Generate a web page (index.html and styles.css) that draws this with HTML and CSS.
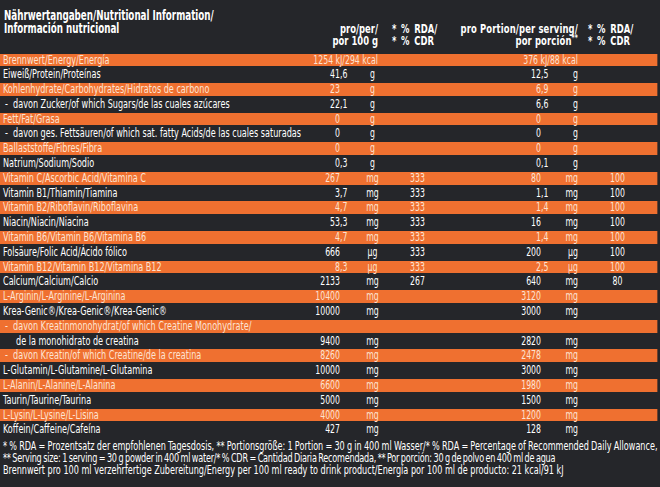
FILE: index.html
```html
<!DOCTYPE html>
<html lang="de">
<head>
<meta charset="utf-8">
<title>Nährwertangaben</title>
<link rel="stylesheet" href="styles.css">
</head>
<body>
<div class="frame">
<div class="page">
  <div class="head">
    <div class="title">Nährwertangaben/Nutritional Information/<br>Información nutricional</div>
    <div class="h h-v1">pro/per/<br>por 100 g</div>
    <div class="h h-r1">* % RDA/<br>* % CDR</div>
    <div class="h h-v2">pro Portion/per serving/<br>por porción<sup>**</sup></div>
    <div class="h h-r2">* % RDA/<br>* % CDR</div>
  </div>
  <div class="rows">
    <div class="row o"><span class="l">Brennwert/Energy/Energía</span><span class="e1">1254 kJ/294 kcal</span><span class="r1"></span><span class="e2">376 kJ/88 kcal</span><span class="r2"></span></div>
    <div class="row"><span class="l">Eiweiß/Protein/Proteínas</span><span class="v1"><i>41</i>,6</span><span class="u1">g</span><span class="r1"></span><span class="v2"><i>12</i>,5</span><span class="u2">g</span><span class="r2"></span></div>
    <div class="row o"><span class="l">Kohlenhydrate/Carbohydrates/Hidratos de carbono</span><span class="v1"><i>23</i></span><span class="u1">g</span><span class="r1"></span><span class="v2"><i>6</i>,9</span><span class="u2">g</span><span class="r2"></span></div>
    <div class="row"><span class="l sub">-&nbsp; davon Zucker/of which Sugars/de las cuales azúcares</span><span class="v1"><i>22</i>,1</span><span class="u1">g</span><span class="r1"></span><span class="v2"><i>6</i>,6</span><span class="u2">g</span><span class="r2"></span></div>
    <div class="row o"><span class="l">Fett/Fat/Grasa</span><span class="v1"><i>0</i></span><span class="u1">g</span><span class="r1"></span><span class="v2"><i>0</i></span><span class="u2">g</span><span class="r2"></span></div>
    <div class="row"><span class="l sub">-&nbsp; davon ges. Fettsäuren/of which sat. fatty Acids/de las cuales saturadas</span><span class="v1"><i>0</i></span><span class="u1">g</span><span class="r1"></span><span class="v2"><i>0</i></span><span class="u2">g</span><span class="r2"></span></div>
    <div class="row o"><span class="l">Ballaststoffe/Fibres/Fibra</span><span class="v1"><i>0</i></span><span class="u1">g</span><span class="r1"></span><span class="v2"><i>0</i></span><span class="u2">g</span><span class="r2"></span></div>
    <div class="row"><span class="l">Natrium/Sodium/Sodio</span><span class="v1"><i>0</i>,3</span><span class="u1">g</span><span class="r1"></span><span class="v2"><i>0</i>,1</span><span class="u2">g</span><span class="r2"></span></div>
    <div class="row o"><span class="l">Vitamin C/Ascorbic Acid/Vitamina C</span><span class="v1"><i>267</i></span><span class="u1">mg</span><span class="r1">333</span><span class="v2"><i>80</i></span><span class="u2">mg</span><span class="r2">100</span></div>
    <div class="row"><span class="l">Vitamin B1/Thiamin/Tiamina</span><span class="v1"><i>3</i>,7</span><span class="u1">mg</span><span class="r1">333</span><span class="v2"><i>1</i>,1</span><span class="u2">mg</span><span class="r2">100</span></div>
    <div class="row o"><span class="l">Vitamin B2/Riboflavin/Riboflavina</span><span class="v1"><i>4</i>,7</span><span class="u1">mg</span><span class="r1">333</span><span class="v2"><i>1</i>,4</span><span class="u2">mg</span><span class="r2">100</span></div>
    <div class="row"><span class="l">Niacin/Niacin/Niacina</span><span class="v1"><i>53</i>,3</span><span class="u1">mg</span><span class="r1">333</span><span class="v2"><i>16</i></span><span class="u2">mg</span><span class="r2">100</span></div>
    <div class="row o"><span class="l">Vitamin B6/Vitamin B6/Vitamina B6</span><span class="v1"><i>4</i>,7</span><span class="u1">mg</span><span class="r1">333</span><span class="v2"><i>1</i>,4</span><span class="u2">mg</span><span class="r2">100</span></div>
    <div class="row"><span class="l">Folsäure/Folic Acid/Ácido fólico</span><span class="v1"><i>666</i></span><span class="u1">µg</span><span class="r1">333</span><span class="v2"><i>200</i></span><span class="u2">µg</span><span class="r2">100</span></div>
    <div class="row o"><span class="l">Vitamin B12/Vitamin B12/Vitamina B12</span><span class="v1"><i>8</i>,3</span><span class="u1">µg</span><span class="r1">333</span><span class="v2"><i>2</i>,5</span><span class="u2">µg</span><span class="r2">100</span></div>
    <div class="row"><span class="l">Calcium/Calcium/Calcio</span><span class="v1"><i>2133</i></span><span class="u1">mg</span><span class="r1">267</span><span class="v2"><i>640</i></span><span class="u2">mg</span><span class="r2">80</span></div>
    <div class="row o"><span class="l">L-Arginin/L-Arginine/L-Arginina</span><span class="v1"><i>10400</i></span><span class="u1">mg</span><span class="r1"></span><span class="v2"><i>3120</i></span><span class="u2">mg</span><span class="r2"></span></div>
    <div class="row"><span class="l">Krea-Genic®/Krea-Genic®/Krea-Genic®</span><span class="v1"><i>10000</i></span><span class="u1">mg</span><span class="r1"></span><span class="v2"><i>3000</i></span><span class="u2">mg</span><span class="r2"></span></div>
    <div class="row o"><span class="l sub">-&nbsp; davon Kreatinmonohydrat/of which Creatine Monohydrate/</span></div>
    <div class="row"><span class="l ind">de la monohidrato de creatina</span><span class="v1"><i>9400</i></span><span class="u1">mg</span><span class="r1"></span><span class="v2"><i>2820</i></span><span class="u2">mg</span><span class="r2"></span></div>
    <div class="row o"><span class="l sub">-&nbsp; davon Kreatin/of which Creatine/de la creatina</span><span class="v1"><i>8260</i></span><span class="u1">mg</span><span class="r1"></span><span class="v2"><i>2478</i></span><span class="u2">mg</span><span class="r2"></span></div>
    <div class="row"><span class="l">L-Glutamin/L-Glutamine/L-Glutamina</span><span class="v1"><i>10000</i></span><span class="u1">mg</span><span class="r1"></span><span class="v2"><i>3000</i></span><span class="u2">mg</span><span class="r2"></span></div>
    <div class="row o"><span class="l">L-Alanin/L-Alanine/L-Alanina</span><span class="v1"><i>6600</i></span><span class="u1">mg</span><span class="r1"></span><span class="v2"><i>1980</i></span><span class="u2">mg</span><span class="r2"></span></div>
    <div class="row"><span class="l">Taurin/Taurine/Taurina</span><span class="v1"><i>5000</i></span><span class="u1">mg</span><span class="r1"></span><span class="v2"><i>1500</i></span><span class="u2">mg</span><span class="r2"></span></div>
    <div class="row o"><span class="l">L-Lysin/L-Lysine/L-Lisina</span><span class="v1"><i>4000</i></span><span class="u1">mg</span><span class="r1"></span><span class="v2"><i>1200</i></span><span class="u2">mg</span><span class="r2"></span></div>
    <div class="row"><span class="l">Koffein/Caffeine/Cafeína</span><span class="v1"><i>427</i></span><span class="u1">mg</span><span class="r1"></span><span class="v2"><i>128</i></span><span class="u2">mg</span><span class="r2"></span></div>
  </div>
  <div class="foot">
    <p class="f1">* % RDA = Prozentsatz der empfohlenen Tagesdosis, ** Portionsgröße: 1 Portion = 30 g in 400 ml Wasser/* % RDA = Percentage of Recommended Daily Allowance,</p>
    <p class="f2">** Serving size: 1 serving = 30 g powder in 400 ml water/* % CDR = Cantidad Diaria Recomendada, ** Por porción: 30 g de polvo en 400 ml de agua</p>
    <p class="f3">Brennwert pro 100 ml verzehrfertige Zubereitung/Energy per 100 ml ready to drink product/Energía por 100 ml de producto: 21 kcal/91 kJ</p>
  </div>
</div>
</div>
</body>
</html>
```

FILE: styles.css
```css
:root {
  /* horizontal squeeze that emulates the condensed typeface of the label */
  --s: 0.72;
  --cols: calc(300px / var(--s)) calc(55px / var(--s)) calc(35px / var(--s)) calc(52px / var(--s)) calc(118px / var(--s)) calc(18px / var(--s)) calc(79px / var(--s));
}
html, body {
  margin: 0;
  padding: 0;
}
body {
  background: #25262a;
  color: #ffffff;
  font-family: "DejaVu Sans Condensed", "DejaVu Sans", sans-serif;
  font-stretch: condensed;
  width: 660px;
  height: 487px;
  overflow: hidden;
}
.frame {
  width: 660px;
  height: 487px;
  overflow: hidden;
}
.page {
  width: calc(657px / var(--s));
  transform: scaleX(var(--s));
  transform-origin: 0 0;
}
.head {
  display: grid;
  grid-template-columns: var(--cols);
  height: 52.5px;
  font-weight: bold;
}
.title {
  grid-column: 1 / 2;
  padding: 9px 0 0 calc(4px / var(--s));
  font-size: 13.5px;
  line-height: 13px;
  white-space: nowrap;
}
.h {
  padding-top: 22.5px;
  font-size: 13px;
  line-height: 12.5px;
  white-space: nowrap;
}
.h sup {
  font-size: 9px;
  line-height: 0;
  vertical-align: 4px;
}
.h-v1 {
  grid-column: 2 / 4;
  text-align: right;
  padding-right: calc(12px / var(--s));
}
.h-r1 {
  grid-column: 4 / 5;
  padding-left: calc(2px / var(--s));
  word-spacing: 2.5px;
}
.h-v2 {
  grid-column: 5 / 7;
  text-align: right;
  letter-spacing: 0.2px;
}
.h-r2 {
  grid-column: 7 / 8;
  padding-left: calc(10px / var(--s));
  word-spacing: 2.5px;
}
.rows {
  display: flex;
  flex-direction: column;
  gap: 2px;
  padding: 1px 0;
}
.row {
  display: grid;
  grid-template-columns: var(--cols);
  height: 12.8px;
  font-size: 12px;
  line-height: 12.8px;
  white-space: nowrap;
}
.row.o {
  background: #ef7030;
  color: #fde3d2;
}
.l {
  padding-left: calc(3px / var(--s));
  font-size: 12.5px;
}
.l.sub {
  padding-left: calc(5px / var(--s));
}
.l.ind {
  padding-left: calc(16px / var(--s));
}
.v1 i, .v2 i {
  font-style: normal;
  display: inline-block;
  text-align: right;
}
.v1 i {
  width: calc(40px / var(--s));
}
.v2 i {
  width: calc(99px / var(--s));
}
.u1, .r1, .r2 {
  text-align: center;
}
.r1 {
  padding-left: calc(3px / var(--s));
}
.u2 {
  text-align: right;
}
.e1 {
  grid-column: 2 / 4;
  text-align: right;
  padding-right: calc(12px / var(--s));
}
.e2 {
  grid-column: 5 / 7;
  text-align: right;
}
.foot {
  padding: 3px 0 0 calc(3px / var(--s));
  font-size: 12.5px;
  line-height: 12px;
}
.foot p {
  margin: 0;
  white-space: nowrap;
}
.f1 {
  word-spacing: -0.5px;
}
.f2 {
  letter-spacing: -0.3px;
  word-spacing: -1px;
}
```
